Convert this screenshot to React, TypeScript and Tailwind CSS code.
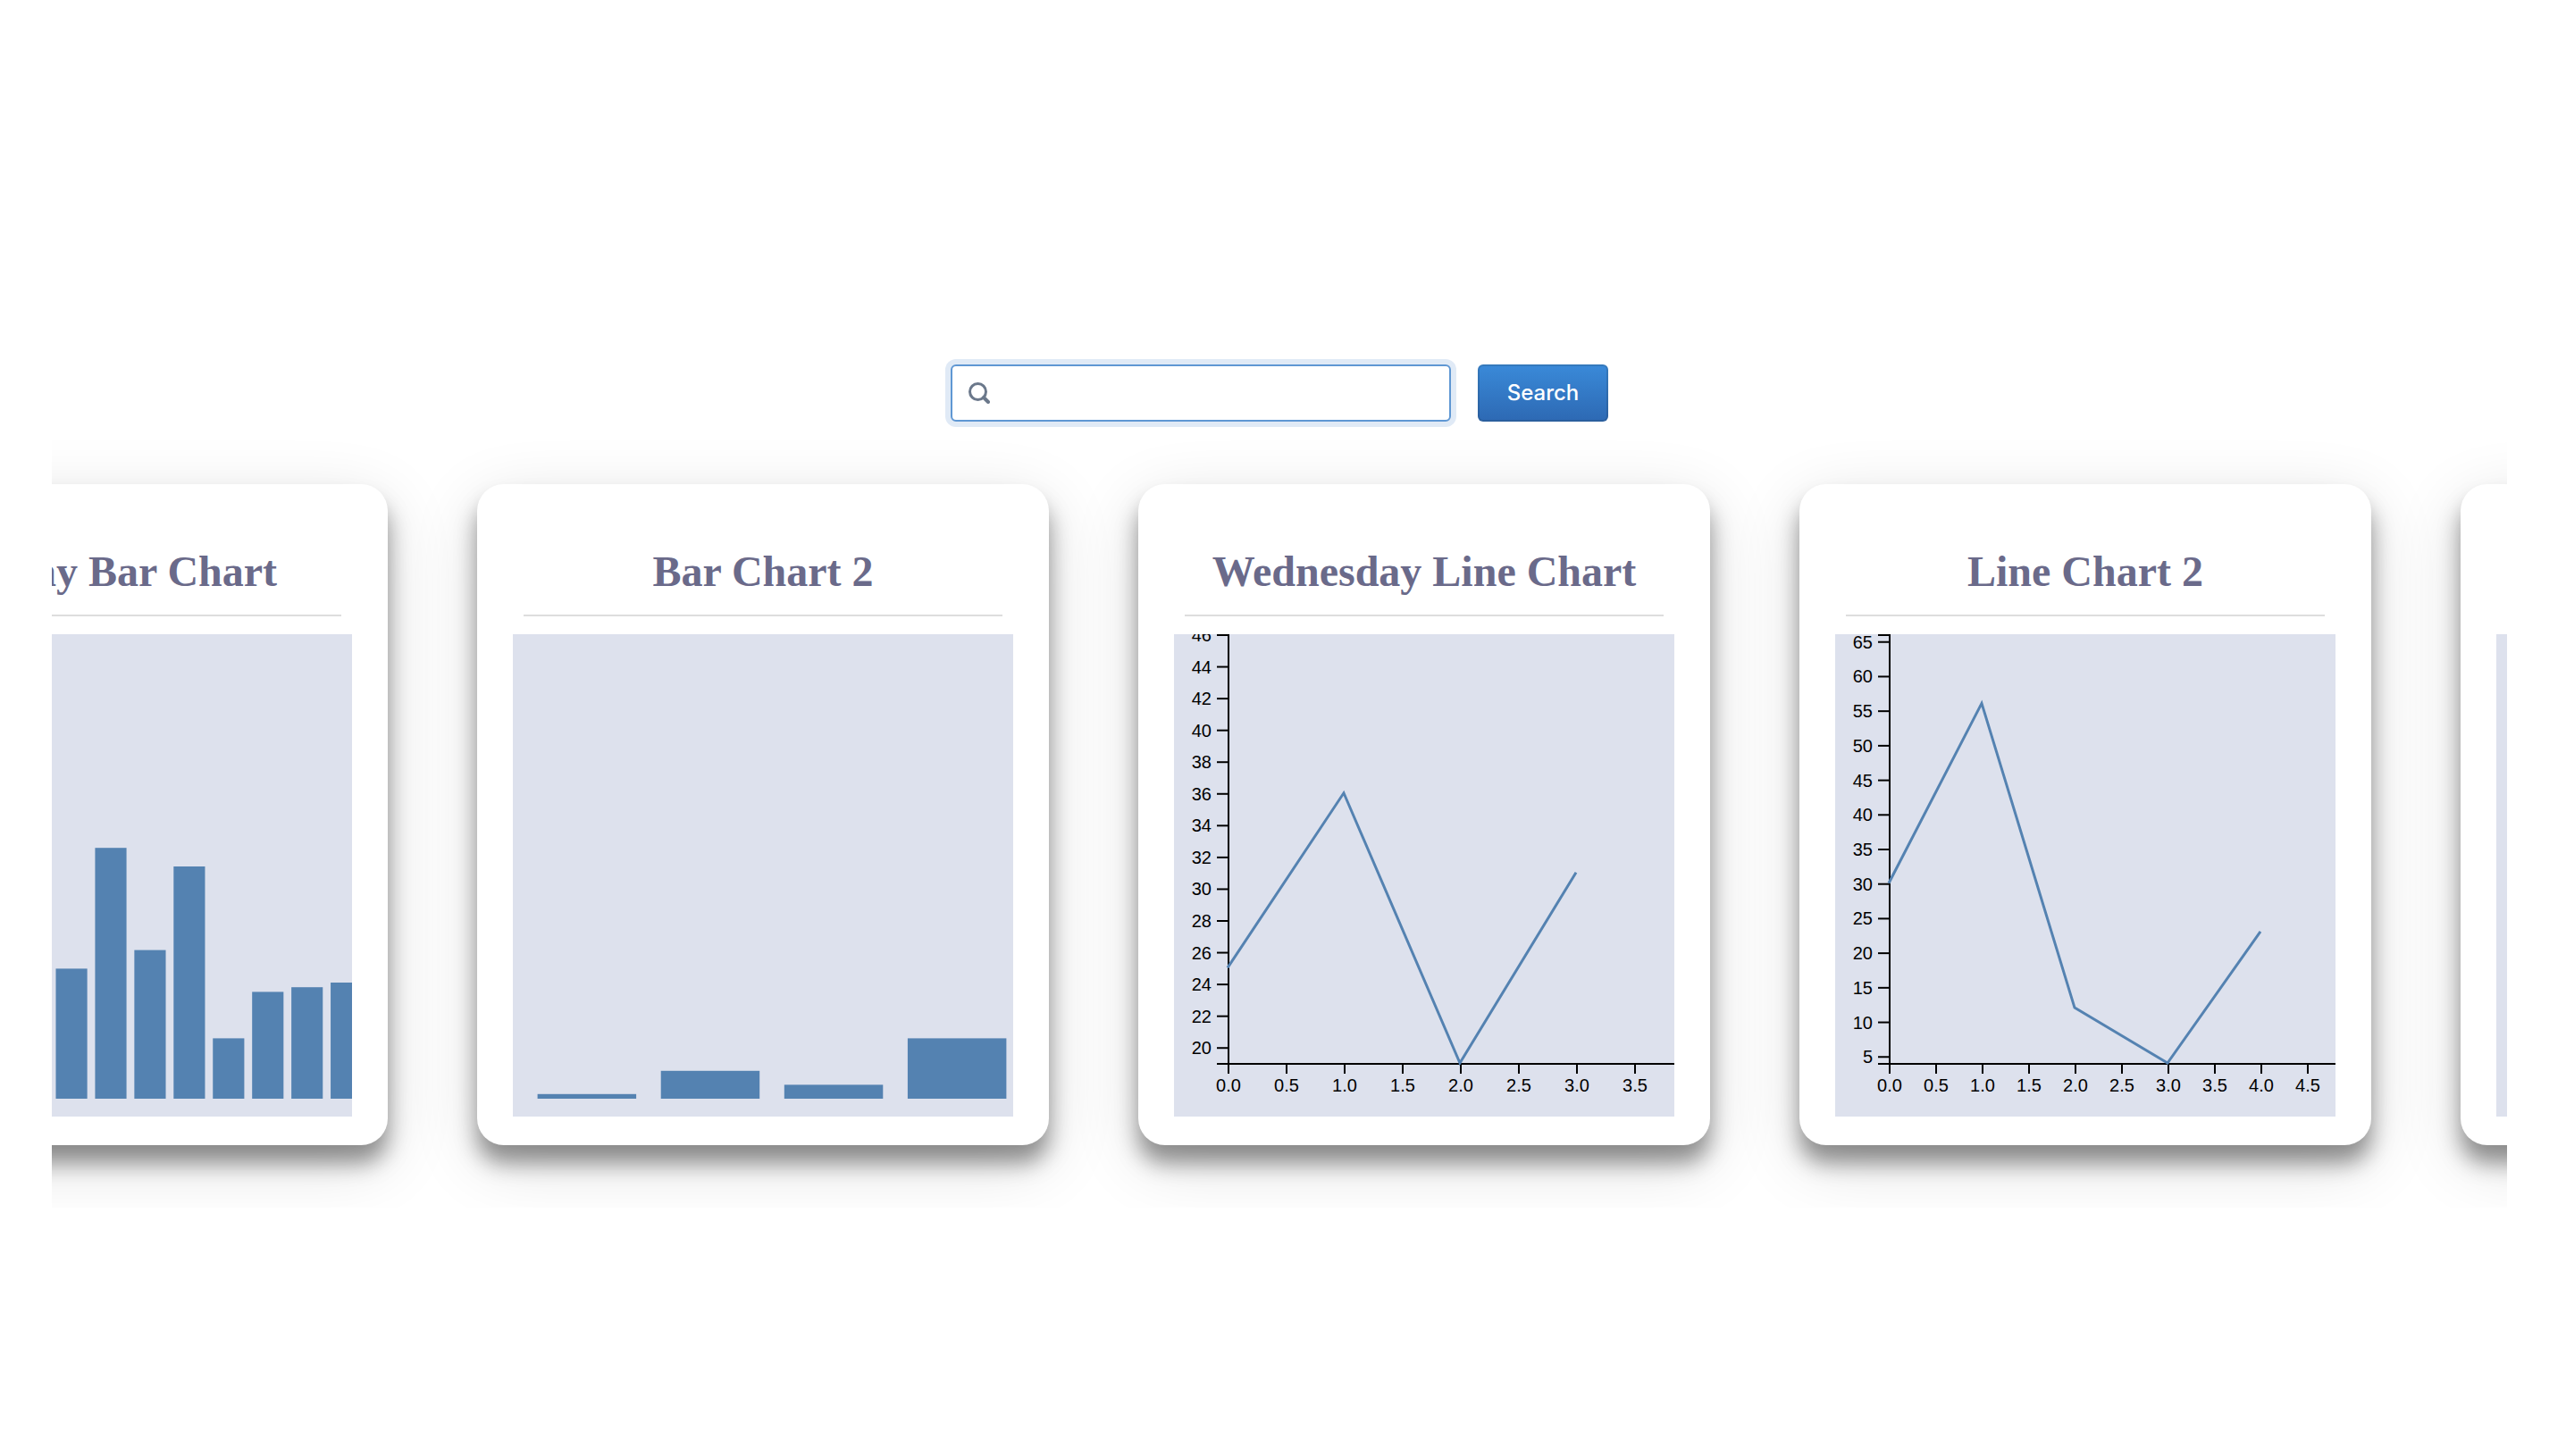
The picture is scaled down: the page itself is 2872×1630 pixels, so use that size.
import { useLayoutEffect, useRef } from "react";

type Chart =
  | { id: string; kind: "bar"; title: string; values: number[] }
  | {
      id: string;
      kind: "line";
      title: string;
      values: number[];
      yDomain: [number, number];
      yStep: number;
    };

const charts: Chart[] = [
  {
    id: "tuesday-bar",
    kind: "bar",
    title: "Tuesday Bar Chart",
    values: [12, 18, 9, 22, 15, 28, 54, 32, 50, 13, 23, 24, 25],
  },
  { id: "bar-2", kind: "bar", title: "Bar Chart 2", values: [1, 6, 3, 13] },
  {
    id: "wednesday-line",
    kind: "line",
    title: "Wednesday Line Chart",
    values: [25, 36, 19, 31],
    yDomain: [19, 46],
    yStep: 2,
  },
  {
    id: "line-2",
    kind: "line",
    title: "Line Chart 2",
    values: [30, 56, 12, 4, 23],
    yDomain: [4, 66],
    yStep: 5,
  },
  { id: "empty", kind: "bar", title: "", values: [] },
];

const WIDTH = 560;
const HEIGHT = 540;
const AXIS_X = 60;
const AXIS_Y = 480;
const PLOT_WIDTH = 520;

function BarPlot({ values }: { values: number[] }) {
  const step = 580 / (values.length + 0.2);
  const unit = 5.2;
  return (
    <g className="fill-[#5482b1]">
      {values.map((value, i) => (
        <rect
          key={i}
          x={step * (i + 0.2)}
          y={520 - value * unit}
          width={step * 0.8}
          height={value * unit}
        />
      ))}
    </g>
  );
}

function LinePlot({
  values,
  yDomain,
  yStep,
}: {
  values: number[];
  yDomain: [number, number];
  yStep: number;
}) {
  const [low, high] = yDomain;
  const y = (v: number) => (AXIS_Y * (high - v)) / (high - low);
  const x = (v: number) => AXIS_X + (v * PLOT_WIDTH) / values.length;

  const yTicks: number[] = [];
  for (let v = Math.ceil(low / yStep) * yStep; v <= high; v += yStep) yTicks.push(v);
  const xTicks: number[] = [];
  for (let v = 0; v < values.length; v += 0.5) xTicks.push(v);

  return (
    <g>
      <g fill="none" stroke="black" strokeWidth={2}>
        <path d={`M48 1H61V${AXIS_Y + 1}H48`} />
        <path d={`M61 ${AXIS_Y + 12}V${AXIS_Y + 1}H581`} />
        {yTicks.map((v) => (
          <path key={v} strokeWidth={2} d={`M48 ${y(v) + 1}H61`} />
        ))}
        {xTicks.map((v) => (
          <path key={v} d={`M${x(v) + 1} ${AXIS_Y + 1}v11`} />
        ))}
      </g>
      <g className="fill-black font-['Liberation_Sans',sans-serif] text-[20px]">
        {yTicks.map((v) => (
          <text key={v} x={42} y={y(v) + 1} dy="0.35em" textAnchor="end">
            {v}
          </text>
        ))}
        {xTicks.map((v) => (
          <text key={v} x={x(v) + 1} y={AXIS_Y + 32} textAnchor="middle">
            {v.toFixed(1)}
          </text>
        ))}
      </g>
      <polyline
        fill="none"
        stroke="#5482b1"
        strokeWidth={3}
        points={values.map((v, i) => `${x(i)},${y(v)}`).join(" ")}
      />
    </g>
  );
}

function ChartCard({ chart }: { chart: Chart }) {
  return (
    <li className="w-[640px] shrink-0 rounded-[30px] bg-white px-10 pt-14 pb-8 shadow-[0_20px_24px_rgba(0,0,0,0.4),0_20px_76px_rgba(0,0,0,0.14)]">
      <h2 className="mx-3 mb-5 h-[92px] border-b-2 border-[#dddddd] pt-4 text-center font-['Liberation_Serif',serif] text-5xl leading-[52px] font-bold whitespace-nowrap text-[#6a6a8a]">
        {chart.title}
      </h2>
      <svg
        viewBox={`0 0 ${WIDTH} ${HEIGHT}`}
        className="block w-full bg-[#dde1ed]"
        role="img"
        aria-label={chart.title}
      >
        {chart.kind === "bar" ? (
          <BarPlot values={chart.values} />
        ) : (
          <LinePlot values={chart.values} yDomain={chart.yDomain} yStep={chart.yStep} />
        )}
      </svg>
    </li>
  );
}

function SearchBar() {
  return (
    <form
      role="search"
      className="flex items-center justify-center gap-[30px]"
      onSubmit={(event) => event.preventDefault()}
    >
      <label className="flex h-16 w-[560px] items-center gap-3 rounded-md border-2 border-[#5f97d3] bg-white px-[18px] shadow-[0_0_0_6px_#e0eaf6]">
        <svg viewBox="0 0 24 24" className="size-6 shrink-0" fill="none" stroke="#6b788b" aria-hidden="true">
          <circle cx="10.5" cy="10.5" r="9" strokeWidth="3" />
          <path d="M17 17l5 5" strokeWidth="4" strokeLinecap="round" />
        </svg>
        <input
          type="search"
          aria-label="Search charts"
          className="min-w-0 flex-1 bg-transparent font-['Inter',sans-serif] text-2xl outline-none"
        />
      </label>
      <button
        type="submit"
        className="h-16 w-[146px] rounded-md border-2 border-[#1b1f23]/15 bg-linear-to-b from-[#3a8ad9] to-[#2d69b3] bg-origin-border font-['Inter',sans-serif] text-2xl font-medium text-white"
      >
        Search
      </button>
    </form>
  );
}

export default function App() {
  const track = useRef<HTMLUListElement>(null);

  useLayoutEffect(() => {
    if (track.current) track.current.scrollLeft = 264;
  }, []);

  return (
    <main className="min-h-screen bg-white pt-[408px] pr-[66px] pl-[58px]">
      <SearchBar />
      <ul ref={track} className="flex gap-[100px] overflow-x-auto py-[70px] [scrollbar-width:none]">
        {charts.map((chart) => (
          <ChartCard key={chart.id} chart={chart} />
        ))}
      </ul>
    </main>
  );
}
